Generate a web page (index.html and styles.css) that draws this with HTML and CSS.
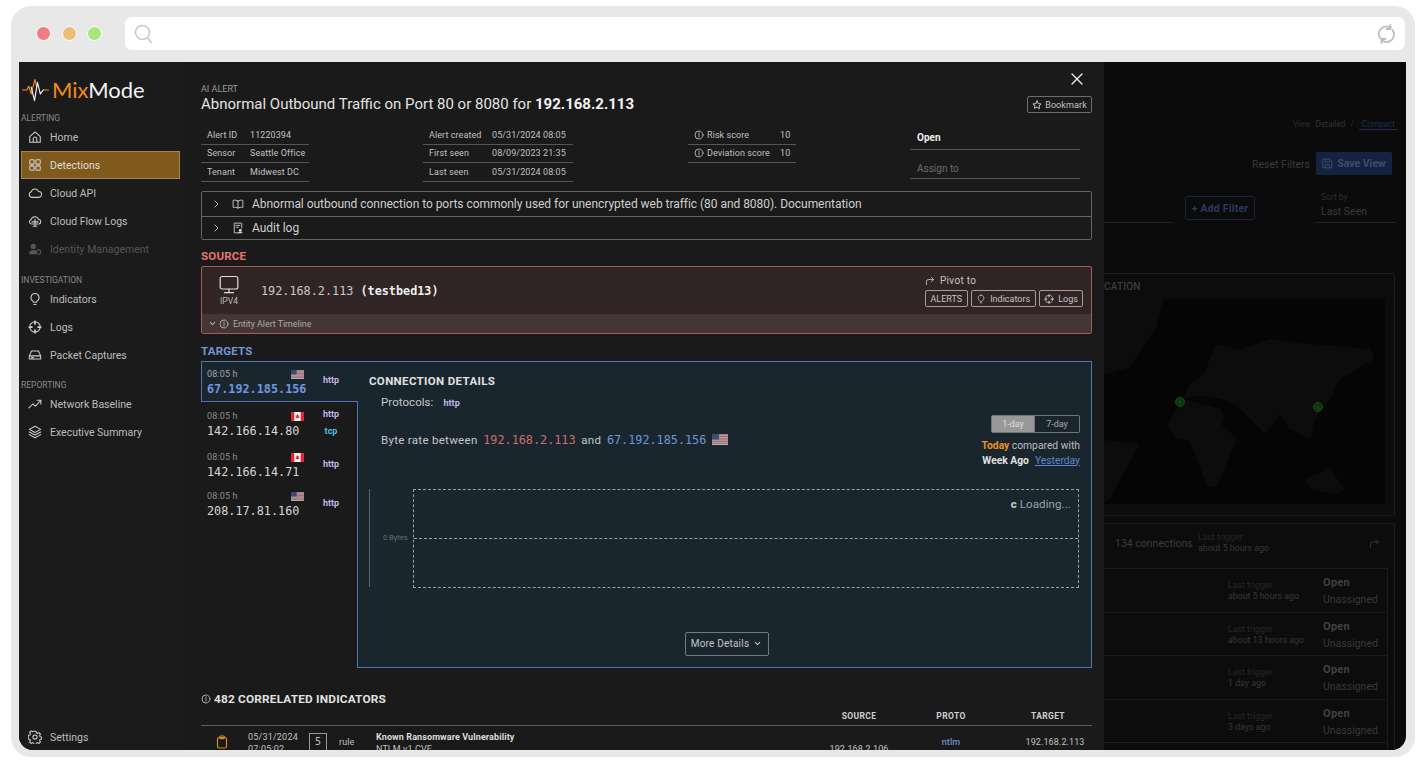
FILE: index.html
```html
<!DOCTYPE html>
<html lang="en">
<head>
<meta charset="utf-8">
<title>MixMode</title>
<link rel="stylesheet" href="styles.css">
</head>
<body>
<svg class="defs" width="0" height="0" aria-hidden="true">
  <symbol id="i-home" viewBox="0 0 16 16"><path d="M2 7.500 8 2.200l6 5.300V14H2zM6 14v-4a2 2 0 0 1 4 0v4"/></symbol>
  <symbol id="i-grid" viewBox="0 0 16 16"><rect x="2" y="2" width="5" height="5" rx="1"/><rect x="9" y="2" width="5" height="5" rx="1"/><rect x="2" y="9" width="5" height="5" rx="1"/><rect x="9" y="9" width="5" height="5" rx="1"/></symbol>
  <symbol id="i-cloud" viewBox="0 0 16 16"><path d="M4.500 13a3.300 3.300 0 0 1-.6-6.500A4.300 4.300 0 0 1 12 6.200a3.400 3.400 0 0 1 .4 6.800z"/></symbol>
  <symbol id="i-flow" viewBox="0 0 16 16"><path d="M4 11.500a2.600 2.600 0 0 1-.4-5.100A4.400 4.400 0 0 1 12 6a2.800 2.800 0 0 1 .4 5.500"/><path d="M4.500 9h7M5 11.500h6M6 14h4M8 6v8"/></symbol>
  <symbol id="i-user" viewBox="0 0 16 16"><circle cx="6" cy="5" r="3" class="fill"/><path class="fill" d="M1 14c0-3 2-5 5-5 1.500 0 2.500.4 3.200 1v4z"/><circle cx="12" cy="11.500" r="2.500"/></symbol>
  <symbol id="i-bulb" viewBox="0 0 16 16"><path d="M8 1.800a4.600 4.600 0 0 0-2.600 8.400c.5.4.8 1 .9 1.600h3.400c.1-.6.4-1.200.9-1.600A4.600 4.600 0 0 0 8 1.800zM6.800 14.200h2.400"/></symbol>
  <symbol id="i-logs" viewBox="0 0 16 16"><circle cx="8" cy="8" r="6"/><path class="thick" d="M8 1.500v3M8 11.500v3M1.500 8h3M11.500 8h3"/></symbol>
  <symbol id="i-hdd" viewBox="0 0 16 16"><path d="M1.500 9 4 3.500h8L14.500 9v3.500h-13zM1.500 9h13M4 11h2"/></symbol>
  <symbol id="i-trend" viewBox="0 0 16 16"><path d="M1 12.500 5.500 8l3 2.500L14.500 4M10.500 3.800h4.200V8"/></symbol>
  <symbol id="i-layers" viewBox="0 0 16 16"><path d="M8 1.500 14.500 5 8 8.500 1.500 5zM1.500 8 8 11.500 14.500 8M1.500 11 8 14.500l6.500-3.500"/></symbol>
  <symbol id="i-gear" viewBox="0 0 16 16"><circle cx="8" cy="8" r="2.400"/><path d="M6.800 1.500h2.400l.4 1.900 1.300.6 1.700-1 1.600 1.700-1 1.600.6 1.400 1.900.4v2.300l-1.900.4-.6 1.300 1 1.700-1.600 1.600-1.700-1-1.300.6-.4 1.900H6.800l-.4-1.900-1.300-.6-1.700 1-1.600-1.600 1-1.700-.6-1.300-1.900-.4V6.100l1.900-.4.600-1.400-1-1.600 1.600-1.700 1.700 1 1.300-.6z"/></symbol>
  <symbol id="i-book" viewBox="0 0 16 16"><path d="M8 4C6.500 2.900 4 2.700 1.500 3v9.500c2.500-.3 5 0 6.500 1 1.500-1 4-1.300 6.500-1V3C12 2.700 9.500 2.900 8 4zM8 4v9.500"/></symbol>
  <symbol id="i-audit" viewBox="0 0 16 16"><path d="M9 14.500H3v-13h10V8M5.500 4.500h5M5.500 7h3"/><circle class="fill" cx="11" cy="11" r="2"/><path class="fill" d="M8 15c0-1.500 1.300-2.500 3-2.500s3 1 3 2.500z"/></symbol>
  <symbol id="i-monitor" viewBox="0 0 20 20"><rect x="1.200" y="1.500" width="17.600" height="12.500" rx="2"/><path d="M10 14v3.200M5.500 17.700h9"/></symbol>
  <symbol id="i-info" viewBox="0 0 12 12"><circle cx="6" cy="6" r="4.800"/><path d="M6 5.400v3M6 3.400v.8"/></symbol>
  <symbol id="i-right" viewBox="0 0 12 12"><path d="m4 2 4 4-4 4"/></symbol>
  <symbol id="i-down" viewBox="0 0 12 12"><path d="m3 4.500 3 3 3-3"/></symbol>
  <symbol id="i-pivot" viewBox="0 0 14 14"><path d="M2 12V7.500A2.500 2.500 0 0 1 4.500 5H12M9 2l3 3-3 3"/></symbol>
  <symbol id="i-star" viewBox="0 0 12 12"><path d="m6 1.200 1.500 3.100 3.400.5-2.500 2.300.6 3.400L6 8.400l-3 1.600.6-3.400L1.100 4.800l3.400-.5z"/></symbol>
  <symbol id="i-close" viewBox="0 0 12 12"><path d="m1 1 10 10M11 1 1 11"/></symbol>
  <symbol id="i-clip" viewBox="0 0 12 14"><rect x="1.500" y="2.500" width="9" height="10.500" rx="1.500"/><rect x="3.800" y="1" width="4.400" height="2.600" rx=".6"/></symbol>
  <symbol id="i-save" viewBox="0 0 14 14"><path d="M1.500 1.500h8.500l2.500 2.500v8.500h-11zM4 1.500v3.500h5.500v-3.500M4 12.500V8.500h6v4"/></symbol>
  <symbol id="f-us" viewBox="0 0 16 11"><rect width="16" height="11" fill="#f2f2f2"/><path d="M0 .85h16M0 2.550h16M0 4.250h16M0 5.950h16M0 7.650h16M0 9.350h16" stroke="#d4616b" stroke-width=".85" fill="none"/><rect width="7" height="5.500" fill="#4a5a95"/></symbol>
  <symbol id="f-ca" viewBox="0 0 16 11"><rect width="16" height="11" fill="#f4f4f4"/><rect width="4" height="11" fill="#ea2230"/><rect x="12" width="4" height="11" fill="#ea2230"/><path d="m8 2.500 1 1.800.8-.3-.3 2 .9-.3-.4 1.200L8 7.500 6 6.900l-.4-1.200.9.300-.3-2 .8.3z" fill="#ea2230"/></symbol>
</svg>

<div class="frame">
  <div class="toolbar">
    <div class="dots"><span class="dot dot-red"></span><span class="dot dot-amber"></span><span class="dot dot-green"></span></div>
    <div class="address">
      <svg class="search" viewBox="0 0 20 20"><circle cx="8.500" cy="8.500" r="7"/><path d="m13.500 14 4 4.500"/></svg>
      <svg class="reload" viewBox="0 0 20 20"><path d="M4 14A7.500 7.500 0 0 1 14 3.500M16.500 6A7.500 7.500 0 0 1 6 16.500"/><path d="M14.500 1v4h-4M5.500 19v-4h4"/></svg>
    </div>
  </div>

  <div class="screen">
    <aside class="sidebar">
      <div class="logo">
        <svg class="logo-mark" viewBox="0 0 28 24"><path class="logo-o" d="M0 12h5l2-4 2.500 8L13.500 1l1.500 7"/><path class="logo-o" d="M22 12h6"/><path class="logo-w" d="M9.500 9l3.500 14 3-19 3 12 3-4"/></svg>
        <span class="logo-text"><span class="logo-mix">Mix</span>Mode</span>
      </div>
      <div class="nav-label">ALERTING</div>
      <a class="nav-item"><svg class="ic"><use href="#i-home"/></svg>Home</a>
      <a class="nav-item active"><svg class="ic"><use href="#i-grid"/></svg>Detections</a>
      <a class="nav-item"><svg class="ic"><use href="#i-cloud"/></svg>Cloud API</a>
      <a class="nav-item"><svg class="ic"><use href="#i-flow"/></svg>Cloud Flow Logs</a>
      <a class="nav-item disabled"><svg class="ic"><use href="#i-user"/></svg>Identity Management</a>
      <div class="nav-label spaced">INVESTIGATION</div>
      <a class="nav-item"><svg class="ic"><use href="#i-bulb"/></svg>Indicators</a>
      <a class="nav-item"><svg class="ic"><use href="#i-logs"/></svg>Logs</a>
      <a class="nav-item"><svg class="ic"><use href="#i-hdd"/></svg>Packet Captures</a>
      <div class="nav-label tight">REPORTING</div>
      <a class="nav-item"><svg class="ic"><use href="#i-trend"/></svg>Network Baseline</a>
      <a class="nav-item"><svg class="ic"><use href="#i-layers"/></svg>Executive Summary</a>
      <a class="nav-item settings"><svg class="ic"><use href="#i-gear"/></svg>Settings</a>
    </aside>

    <main class="main">
      <header class="head">
        <div class="head-text">
          <div class="eyebrow">AI ALERT</div>
          <h1 class="title">Abnormal Outbound Traffic on Port 80 or 8080 for <b>192.168.2.113</b></h1>
        </div>
        <div class="head-actions">
          <svg class="close"><use href="#i-close"/></svg>
          <button class="btn bookmark"><svg class="ic-s"><use href="#i-star"/></svg>Bookmark</button>
        </div>
      </header>

      <section class="meta">
        <div class="kv kv-a">
          <div class="kv-row"><span class="k">Alert ID</span><span>11220394</span></div>
          <div class="kv-row"><span class="k">Sensor</span><span>Seattle Office</span></div>
          <div class="kv-row"><span class="k">Tenant</span><span>Midwest DC</span></div>
        </div>
        <div class="kv kv-b">
          <div class="kv-row"><span class="k">Alert created</span><span>05/31/2024 08:05</span></div>
          <div class="kv-row"><span class="k">First seen</span><span>08/09/2023 21:35</span></div>
          <div class="kv-row"><span class="k">Last seen</span><span>05/31/2024 08:05</span></div>
        </div>
        <div class="kv kv-c">
          <div class="kv-row"><span class="k"><svg class="ic-s"><use href="#i-info"/></svg>Risk score</span><span>10</span></div>
          <div class="kv-row"><span class="k"><svg class="ic-s"><use href="#i-info"/></svg>Deviation score</span><span>10</span></div>
        </div>
        <div class="status">
          <div class="status-open">Open</div>
          <div class="status-assign">Assign to</div>
        </div>
      </section>

      <section class="accordion">
        <div class="acc-row"><svg class="chev"><use href="#i-right"/></svg><svg class="ic"><use href="#i-book"/></svg>Abnormal outbound connection to ports commonly used for unencrypted web traffic (80 and 8080). Documentation</div>
        <div class="acc-row"><svg class="chev"><use href="#i-right"/></svg><svg class="ic"><use href="#i-audit"/></svg>Audit log</div>
      </section>

      <h2 class="sec sec-source">SOURCE</h2>
      <section class="source">
        <div class="source-top">
          <div class="source-kind"><svg class="monitor"><use href="#i-monitor"/></svg><span>IPV4</span></div>
          <div class="source-ip">192.168.2.113 <b>(testbed13)</b></div>
          <div class="pivot">
            <div class="pivot-label"><svg class="ic-p"><use href="#i-pivot"/></svg>Pivot to</div>
            <div class="pivot-btns">
              <span class="tag">ALERTS</span>
              <span class="tag"><svg class="ic-s"><use href="#i-bulb"/></svg>Indicators</span>
              <span class="tag"><svg class="ic-s"><use href="#i-logs"/></svg>Logs</span>
            </div>
          </div>
        </div>
        <div class="source-foot"><svg class="ic-d"><use href="#i-down"/></svg><svg class="ic-s"><use href="#i-info"/></svg>Entity Alert Timeline</div>
      </section>

      <h2 class="sec sec-targets">TARGETS</h2>
      <section class="targets">
        <div class="target-list">
          <div class="target selected">
            <div class="t-info"><div class="t-top"><span>08:05 h</span><svg class="flag pale"><use href="#f-us"/></svg></div><div class="t-ip">67.192.185.156</div></div>
            <div class="t-proto"><span class="http">http</span></div>
          </div>
          <div class="target t-two">
            <div class="t-info"><div class="t-top"><span>08:05 h</span><svg class="flag"><use href="#f-ca"/></svg></div><div class="t-ip">142.166.14.80</div></div>
            <div class="t-proto"><span class="http">http</span><span class="tcp">tcp</span></div>
          </div>
          <div class="target t-three">
            <div class="t-info"><div class="t-top"><span>08:05 h</span><svg class="flag"><use href="#f-ca"/></svg></div><div class="t-ip">142.166.14.71</div></div>
            <div class="t-proto"><span class="http">http</span></div>
          </div>
          <div class="target t-four">
            <div class="t-info"><div class="t-top"><span>08:05 h</span><svg class="flag pale"><use href="#f-us"/></svg></div><div class="t-ip">208.17.81.160</div></div>
            <div class="t-proto"><span class="http">http</span></div>
          </div>
        </div>

        <div class="detail">
          <h3 class="detail-title">CONNECTION DETAILS</h3>
          <div class="protocols">Protocols:<span class="http">http</span></div>
          <div class="rate-row">
            <div class="rate">Byte rate between <span class="ip-red">192.168.2.113</span> and <span class="ip-blue">67.192.185.156</span><svg class="flag pale wide"><use href="#f-us"/></svg></div>
            <div class="compare">
              <div class="toggle"><span class="toggle-on">1-day</span><span class="toggle-off">7-day</span></div>
              <div class="cmp-line"><b class="today">Today</b> compared with</div>
              <div class="cmp-line"><b class="week">Week Ago</b><a class="yesterday">Yesterday</a></div>
            </div>
          </div>
          <div class="chart">
            <div class="axis"></div>
            <div class="y-label">0 Bytes</div>
            <div class="plot">
              <div class="plot-half"><span class="loading"><span class="spin">c</span> Loading...</span></div>
            </div>
          </div>
          <div class="more"><button class="btn more-btn">More Details<svg class="ic-d"><use href="#i-down"/></svg></button></div>
        </div>
      </section>

      <h2 class="corr-title"><svg class="ic-i"><use href="#i-info"/></svg>482 CORRELATED INDICATORS</h2>
      <div class="corr-grid corr-head">
        <span class="c-source">SOURCE</span><span class="c-proto">PROTO</span><span class="c-target">TARGET</span>
      </div>
      <div class="corr-grid corr-row">
        <svg class="clip"><use href="#i-clip"/></svg>
        <div class="c-date">05/31/2024<br>07:05:02</div>
        <div class="c-box"><span>5</span></div>
        <div class="c-rule">rule</div>
        <div class="c-name"><b>Known Ransomware Vulnerability</b><br>NTLM v1 CVE</div>
        <div class="c-src">192.168.2.106</div>
        <div class="c-ntlm">ntlm</div>
        <div class="c-tgt">192.168.2.113</div>
      </div>
    </main>

    <div class="backdrop">
      <div class="bd-view"><span>View</span><span class="bd-detailed">Detailed</span><span>/</span><span class="bd-compact">Compact</span></div>
      <div class="bd-actions"><span>Reset Filters</span><span class="bd-save"><svg class="ic-b"><use href="#i-save"/></svg>Save View</span></div>
      <div class="bd-filters">
        <div class="bd-line"></div>
        <span class="bd-add">+ Add Filter</span>
        <div class="bd-sort"><small>Sort by</small><span>Last Seen</span></div>
      </div>
      <div class="bd-card bd-map">
        <div class="bd-map-title">CATION</div>
        <svg class="map" viewBox="1104 300 281 205">
          <path class="land" d="M1104 300h60l-8 28-26 40-26 8z"/>
          <path class="land" d="M1104 441l36 4-14 25-16 30-6 4z"/>
          <path class="land" d="M1183 400l7-15 14-10 12-30 24 6 30-11 40 5 60 5 4 10-34 20-10 20-15 20-5 20-20-10-10-15-15 20-15-15-15-15-15-5-20-3z"/>
          <path class="land" d="M1167 427l16-27 37 10 5 8-3 8 15 14-20 47-10 0-17-45-13-3z"/>
          <path class="land" d="M1305 480l25-10 15 20-10 5-25-5z"/>
          <circle class="pin" cx="1180" cy="403" r="4.500"/><text class="pin-t" x="1180" y="405.500">1</text>
          <circle class="pin" cx="1318" cy="408" r="4.500"/><text class="pin-t" x="1318" y="410.500">1</text>
        </svg>
      </div>
      <div class="bd-card bd-list">
        <div class="bd-conn">
          <span class="bd-count">134 connections</span>
          <div class="bd-trig"><small>Last trigger</small><span>about 5 hours ago</span></div>
          <svg class="ic-bp"><use href="#i-pivot"/></svg>
        </div>
        <div class="bd-rows">
          <div class="bd-row"><div class="bd-trig"><small>Last trigger</small><span>about 5 hours ago</span></div><div class="bd-state"><b>Open</b><span>Unassigned</span></div></div>
          <div class="bd-row"><div class="bd-trig"><small>Last trigger</small><span>about 13 hours ago</span></div><div class="bd-state"><b>Open</b><span>Unassigned</span></div></div>
          <div class="bd-row"><div class="bd-trig"><small>Last trigger</small><span>1 day ago</span></div><div class="bd-state"><b>Open</b><span>Unassigned</span></div></div>
          <div class="bd-row"><div class="bd-trig"><small>Last trigger</small><span>3 days ago</span></div><div class="bd-state"><b>Open</b><span>Unassigned</span></div></div>
          <div class="bd-row"></div>
        </div>
      </div>
    </div>
  </div>
</div>
</body>
</html>
```

FILE: styles.css
```css
* { box-sizing: border-box; }
html, body { margin: 0; padding: 0; height: 100%; background: #fff; overflow: hidden; }
body { font-family: Roboto, "Noto Sans", sans-serif; color: #ccc; font-size: 10px; }
.defs { position: absolute; }
svg { fill: none; stroke: currentColor; stroke-width: 1.2; stroke-linecap: round; stroke-linejoin: round; flex: none; }
.fill { fill: currentColor; stroke: none; }
.thick { stroke-width: 2; }
h1, h2, h3 { margin: 0; }
button { font-family: inherit; }

.frame { width: 1404px; height: 751px; margin: 6px 0 0 11px; padding: 0 9px 7px 8px; background: #e8e8e8; border-radius: 20px; display: flex; flex-direction: column; }
.toolbar { height: 56px; flex: none; display: flex; align-items: center; padding-bottom: 1px; }
.dots { display: flex; gap: 10.500px; padding-left: 17px; width: 106px; flex: none; }
.dot { width: 15px; height: 15px; border-radius: 50%; border: 1.500px solid #fff; }
.dot-red { background: #ee7d84; }
.dot-amber { background: #ebbe78; }
.dot-green { background: #a9e67c; }
.address { flex: 1; height: 33px; margin-right: 1px; background: #fff; border-radius: 7px; display: flex; align-items: center; justify-content: space-between; padding: 0 9px; }
.search { width: 20px; height: 20px; color: #c9c9c9; stroke-width: 1.600; }
.reload { width: 20px; height: 20px; color: #bdbdbd; stroke-width: 1.800; }

.screen { flex: 1; min-height: 0; display: flex; overflow: hidden; background: #0b0b0b; border-radius: 0 0 14px 14px; }

.sidebar { width: 170px; flex: none; padding: 16px 0 0 2px; background: #1b1b1b; border-right: 1px solid #191919; display: flex; flex-direction: column; overflow: hidden; }
.logo { height: 24px; margin-bottom: 10px; display: flex; align-items: center; gap: 3px; padding-left: 1px; }
.logo-mark { width: 27px; height: 24px; stroke-width: 1.200; }
.logo-o { stroke: #f08a1d; }
.logo-w { stroke: #f4f4f4; }
.logo-text { font-family: Lato, sans-serif; font-weight: 400; font-size: 22px; letter-spacing: -.05px; color: #f2f2f2; line-height: 24px; }
.logo-mix { color: #f08a1d; }
.nav-label { height: 11px; line-height: 13px; font-size: 8.500px; color: #8a8a8a; }
.nav-label.spaced { margin-top: 11px; }
.nav-label.tight { margin-top: 10px; }
.nav-item { width: 159px; height: 28px; flex: none; display: flex; align-items: center; gap: 8px; padding-left: 7px; font-size: 10.500px; color: #bdbdbd; white-space: nowrap; }
.nav-item .ic { width: 14px; height: 14px; color: #cfcfcf; }
.nav-item.active { background: #80591c; border: 1px solid #a4855a; padding-left: 6px; color: #ddd; }
.nav-item.disabled { color: #565656; }
.nav-item.disabled .ic { color: #565656; }
.settings { margin-top: auto; padding-top: 2px; }

.main { width: 915px; flex: none; padding: 11px 12px 0; background: #1a1a1a; overflow: hidden; }
.head { display: flex; justify-content: space-between; height: 40px; }
.head-text { padding-top: 11px; }
.eyebrow { height: 11px; line-height: 11px; font-size: 9px; color: #9a9a9a; }
.title { font-size: 15px; line-height: 18px; font-weight: 400; color: #e2e2e2; white-space: nowrap; }
.title b { color: #f2f2f2; font-weight: 700; }
.head-actions { display: flex; flex-direction: column; align-items: flex-end; justify-content: space-between; }
.close { width: 12px; height: 12px; color: #f0f0f0; margin-right: 9px; stroke-width: 1.300; }
.ic-s { width: 10px; height: 10px; }
.btn { background: transparent; border: 1px solid #6c6c6c; border-radius: 2px; color: #c4c4c4; display: inline-flex; align-items: center; }
.bookmark { width: 65px; height: 17px; padding: 0; justify-content: center; gap: 3px; font-size: 9px; letter-spacing: .1px; }

.meta { display: grid; grid-template-columns: 222px 265px 222px 170px; margin-top: 13px; height: 55px; }
.kv-row { height: 18.500px; display: flex; align-items: center; padding-left: 6px; border-bottom: 1px solid #555; font-size: 9px; letter-spacing: .08px; color: #c0c0c0; white-space: nowrap; }
.kv-a { width: 108px; }
.kv-b { width: 150px; }
.kv-c { width: 108px; }
.kv-a .k { width: 43px; }
.kv-b .k { width: 63px; }
.kv-c .k { width: 86px; display: flex; align-items: center; gap: 3px; }
.kv-c .ic-s { color: #aaa; }
.status { width: 170px; }
.status-open { height: 24px; padding: 6px 0 0 7px; border-bottom: 1px solid #555; font-size: 10px; line-height: 12px; font-weight: 700; color: #eee; }
.status-assign { height: 29px; padding: 12px 0 0 7px; border-bottom: 1px solid #555; font-size: 10px; line-height: 13px; color: #6a6a6a; }

.accordion { margin-top: 9.500px; height: 49px; border: 1px solid #636363; border-radius: 2px; }
.acc-row { height: 24px; display: flex; align-items: center; padding-left: 10px; font-size: 12px; letter-spacing: -.04px; color: #cfcfcf; white-space: nowrap; }
.acc-row + .acc-row { border-top: 1px solid #636363; }
.chev { width: 9px; height: 10px; color: #ccc; }
.acc-row .ic { width: 12px; height: 12px; margin: 0 8px 0 11px; color: #ccc; }

.sec { font-size: 11.500px; line-height: 14px; font-weight: 700; letter-spacing: .2px; margin: 9px 0 3px; }
.sec-source { color: #e8736f; }
.sec-targets { color: #6f94d9; margin-top: 10px; }

.source { height: 68px; background: #302424; border: 1px solid #a85a5a; border-radius: 2px; display: flex; flex-direction: column; }
.source-top { height: 47px; display: flex; align-items: center; }
.source-kind { width: 54px; margin-right: 5px; display: flex; flex-direction: column; align-items: center; font-size: 8.500px; color: #bbb; padding-top: 1px; gap: 1px; }
.monitor { width: 20px; height: 20px; color: #ddd; }
.source-ip { flex: 1; font-family: "DejaVu Sans Mono", "Liberation Mono", monospace; font-size: 11.800px; line-height: 16px; padding-top: 1px; color: #c8c8c8; }
.source-ip b { color: #eee; }
.pivot { width: 166px; margin-top: 1px; }
.pivot-label { display: flex; align-items: center; gap: 5px; font-size: 10px; letter-spacing: .3px; color: #c6c6c6; height: 13px; margin-bottom: 3px; }
.ic-p { width: 10px; height: 10px; }
.pivot-btns { display: flex; gap: 3px; }
.tag { height: 17px; padding: 0 4.500px; display: inline-flex; align-items: center; gap: 4px; border: 1px solid #a49b9b; border-radius: 2px; font-size: 9px; color: #c4c4c4; white-space: nowrap; }
.source-foot { height: 19px; background: #453636; display: flex; align-items: center; gap: 1px; padding: 1px 0 0 6px; font-size: 8.800px; color: #b0a8a8; }
.source-foot .ic-s { margin: 0 3px 0 1px; }
.ic-d { width: 9px; height: 9px; stroke-width: 1.400; }

.targets { display: flex; height: 307px; }
.target-list { width: 156px; flex: none; }
.target { display: flex; padding-left: 6px; color: #8c8c8c; }
.t-info { width: 97px; flex: none; }
.t-top { display: flex; justify-content: space-between; align-items: center; height: 15px; font-size: 9px; letter-spacing: .15px; }
.t-ip { font-family: "DejaVu Sans Mono", "Liberation Mono", monospace; font-size: 11.800px; line-height: 15px; color: #d6d6d6; white-space: nowrap; }
.flag { width: 13px; height: 9px; stroke: none; }
.flag.pale { opacity: .72; }
.flag.wide { width: 16px; height: 11px; margin-left: 3.500px; vertical-align: -1px; }
.t-proto { width: 54px; flex: none; display: flex; flex-direction: column; align-items: center; font-size: 9px; font-weight: 700; }
.http { color: #c3b3ec; font-size: 9px; font-weight: 700; }
.tcp { color: #40c0de; margin-top: 7px; }
.target.selected { height: 41px; width: 157px; padding-top: 5px; background: #1a262e; border: 1px solid #5273b0; border-right: 0; position: relative; z-index: 1; padding-left: 5px; }
.target.selected .t-ip { color: #6f97e0; font-weight: 700; }
.target.selected .t-top { color: #a4a4a4; }
.selected .t-proto { padding-top: 8px; }
.t-two { height: 41px; padding-top: 7px; }
.t-three { height: 39px; padding-top: 7px; }
.t-three .t-proto { padding-top: 9px; }
.t-four { height: 39px; padding-top: 7px; }
.t-four .t-proto { padding-top: 9px; }

.detail { flex: 1; height: 307px; background: #1a262e; border: 1px solid #5273b0; padding: 12px 11px 0 11px; display: flex; flex-direction: column; }
.detail-title { height: 14px; font-size: 11.500px; line-height: 14px; font-weight: 700; color: #e0e0e0; letter-spacing: .35px; }
.protocols { height: 14px; margin: 7px 0 0 12px; font-size: 11.500px; line-height: 14px; letter-spacing: .05px; color: #c6c6c6; }
.protocols .http { margin-left: 10px; }
.rate-row { display: flex; justify-content: space-between; margin: 6px 0 0 12px; height: 58px; }
.rate { padding-top: 18px; font-size: 11.500px; line-height: 14px; letter-spacing: .3px; color: #c6c6c6; white-space: nowrap; }
.ip-red, .ip-blue { font-family: "DejaVu Sans Mono", "Liberation Mono", monospace; font-size: 11.800px; margin: 0 2.500px; letter-spacing: 0; }
.ip-red { color: #cc6c6c; }
.ip-blue { color: #6f97d8; }
.compare { width: 100px; text-align: right; font-size: 10.300px; }
.toggle { display: flex; justify-content: flex-end; height: 18px; margin-bottom: 5px; }
.toggle-on, .toggle-off { width: 44px; display: flex; align-items: center; justify-content: center; font-size: 9px; }
.toggle-on { background: #989898; color: #dfdfdf; border: 1px solid #6f7779; border-radius: 2px 0 0 2px; }
.toggle-off { width: 45px; color: #a8a8a8; border: 1px solid #6f7779; border-left: 0; border-radius: 0 2px 2px 0; }
.cmp-line { height: 15px; line-height: 15px; color: #bdbdbd; white-space: nowrap; }
.today { color: #f08e1f; }
.week { color: #e0e0e0; }
.yesterday { color: #5f86cc; text-decoration: underline; margin-left: 6px; }

.chart { display: flex; height: 99px; margin: 16px 1px 0 0; align-items: stretch; position: relative; }
.axis { width: 1px; background: #5c6468; height: 98px; }
.y-label { position: absolute; left: 14px; top: 44px; font-size: 7.500px; color: #666e72; white-space: nowrap; }
.plot { margin-left: 43px; flex: 1; border: 1px dashed #9aa1a5; height: 99px; }
.plot-half { height: 49px; border-bottom: 1px dashed #9aa1a5; display: flex; justify-content: flex-end; padding: 7px 7px 0 0; }
.loading { font-size: 11.500px; line-height: 15px; color: #9ca2a5; letter-spacing: .1px; }
.spin { font-weight: 900; color: #c0c0c0; }
.more { margin-top: 44px; display: flex; justify-content: center; padding-left: 4px; }
.more-btn { width: 84px; height: 24px; padding: 0; justify-content: center; gap: 4px; font-size: 10px; letter-spacing: .2px; color: #c4c4c4; border-color: #737b7f; }

.corr-title { display: flex; align-items: center; gap: 3px; height: 14px; margin-top: 24px; font-size: 11.800px; line-height: 14px; font-weight: 700; letter-spacing: .2px; color: #e0e0e0; white-space: nowrap; }
.ic-i { width: 10px; height: 10px; color: #aaa; }
.corr-grid { display: grid; grid-template-columns: 47px 61px 30px 37px 424px 118px 66px 34px 74px; }
.corr-head { margin-top: 4px; height: 16px; line-height: 12px; border-bottom: 1px solid #5c5c5c; font-size: 8.500px; font-weight: 700; letter-spacing: .35px; color: #cfcfcf; }
.c-source { grid-column: 6; text-align: center; }
.c-proto { grid-column: 7; text-align: center; }
.c-target { grid-column: 9; text-align: center; padding-right: 14px; }
.corr-row { height: 40px; padding-top: 5px; font-size: 9px; color: #c0c0c0; letter-spacing: .1px; }
.clip { width: 12px; height: 14px; color: #d18a26; margin: 4px 0 0 15px; }
.c-date { line-height: 12px; letter-spacing: .2px; }
.c-box { padding-top: 2px; }
.c-box span { display: flex; width: 18px; height: 18px; border: 1px solid #999; align-items: center; justify-content: center; font-family: "DejaVu Sans Mono", monospace; font-size: 10px; }
.c-rule { padding-top: 6px; }
.c-name { line-height: 12px; white-space: nowrap; }
.c-name b { color: #dcdcdc; }
.c-src { text-align: center; padding-top: 13px; }
.c-ntlm { grid-column: 7; text-align: center; padding-top: 6px; color: #6e8ecb; font-weight: 500; }
.c-tgt { grid-column: 9; text-align: center; padding-top: 6px; white-space: nowrap; }

.backdrop { flex: 1; min-width: 0; padding-top: 56px; overflow: hidden; color: #3e3e3e; font-size: 10px; }
.bd-view { display: flex; justify-content: flex-end; gap: 5px; height: 12px; padding-right: 8px; font-size: 8.200px; line-height: 12px; color: #2a2a2a; }
.bd-detailed { color: #333; }
.bd-compact { color: #1e2c50; border-bottom: 1px solid #1e2c50; padding: 0 3px; }
.bd-actions { display: flex; justify-content: flex-end; align-items: flex-end; gap: 6px; height: 23px; margin: 22px 14px 0 0; font-size: 10.500px; color: #3a3a3a; }
.bd-actions > span:first-child { line-height: 21px; }
.bd-save { width: 76px; height: 23px; border-radius: 2px; background: #14233f; color: #3f4c66; font-weight: 700; display: flex; align-items: center; justify-content: center; gap: 4px; }
.ic-b { width: 11px; height: 11px; }
.bd-filters { display: flex; align-items: flex-start; height: 28px; margin-top: 20px; }
.bd-line { width: 69px; height: 28px; border-bottom: 1px solid #232323; }
.bd-add { width: 70px; height: 24px; margin: 1px 0 0 12px; border: 1px solid #17243f; border-radius: 3px; color: #2a3a5c; font-weight: 700; font-size: 10.500px; display: flex; align-items: center; justify-content: center; letter-spacing: .2px; }
.bd-sort { width: 81px; margin: -4px 0 0 60px; height: 32px; padding-left: 6px; border-bottom: 1px solid #232323; display: flex; flex-direction: column; gap: 2px; font-size: 10.500px; color: #3a3a3a; line-height: 14px; }
.bd-sort small { font-size: 8.500px; color: #2c2c2c; line-height: 12px; }
.bd-card { width: 291px; border: 1px solid #1d1d1d; border-left: 0; border-radius: 0 2px 2px 0; background: #0c0c0c; }
.bd-map { height: 243px; margin-top: 50px; padding-top: 6px; }
.bd-map-title { height: 19px; font-size: 10px; line-height: 14px; font-weight: 500; letter-spacing: .2px; color: #3e3e3e; }
.map { display: block; width: 281px; height: 205px; background: #050505; stroke: none; }
.land { fill: #0c0c0c; }
.pin { fill: #0d340d; stroke: #154b15; stroke-width: 1; }
.pin-t { fill: #1c6a1c; stroke: none; font-size: 6px; text-anchor: middle; }
.bd-list { height: 240px; margin-top: 7px; }
.bd-conn { height: 44px; display: flex; align-items: center; padding: 0 0 6px 11px; font-size: 10.500px; color: #3c3c3c; }
.bd-count { width: 83px; white-space: nowrap; }
.bd-trig { display: flex; flex-direction: column; font-size: 8.800px; line-height: 11px; color: #383838; white-space: nowrap; }
.bd-trig small { font-size: 8.800px; color: #272727; }
.ic-bp { width: 11px; height: 11px; color: #3a3a3a; margin-left: auto; margin-right: 14px; }
.bd-rows { width: 284px; border: 1px solid #1d1d1d; border-left: 0; }
.bd-row { height: 43.500px; border-bottom: 1px solid #1d1d1d; display: flex; align-items: center; padding: 2px 0 0 124px; }
.bd-row .bd-trig { width: 95px; }
.bd-state { display: flex; flex-direction: column; font-size: 10.500px; line-height: 17px; color: #383838; }
.bd-state b { color: #414141; font-size: 11px; letter-spacing: .3px; }
```
